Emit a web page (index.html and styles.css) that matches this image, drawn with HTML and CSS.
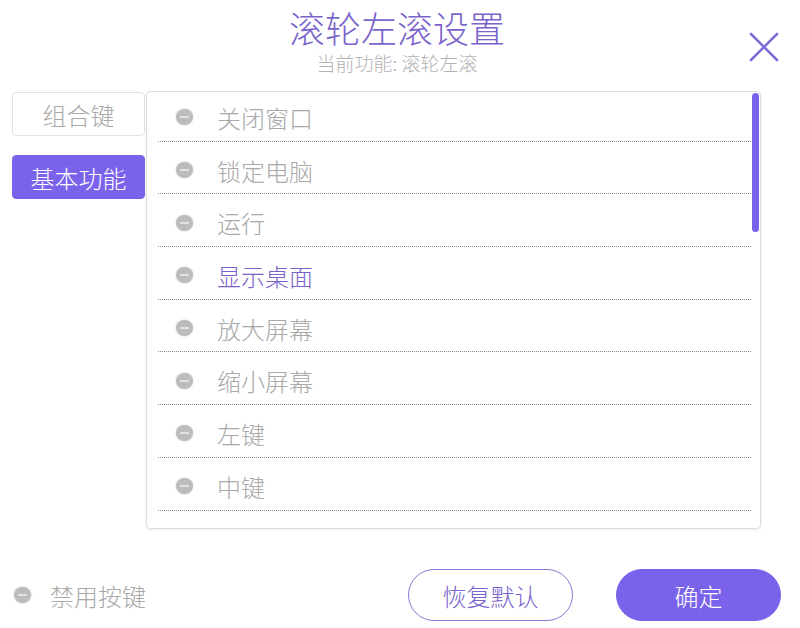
FILE: index.html
```html
<!DOCTYPE html>
<html lang="zh-CN">
<head>
<meta charset="UTF-8" />
<meta name="viewport" content="width=device-width, initial-scale=1" />
<title>滚轮左滚设置</title>
<link rel="stylesheet" href="styles.css">
</head>
<body>
  <header class="dialog-head">
    <div class="head-text">
      <h1 class="title">滚轮左滚设置</h1>
      <p class="subtitle">当前功能: 滚轮左滚</p>
    </div>
    <button class="close-btn" aria-label="关闭">
      <svg width="30" height="30" viewBox="0 0 30 30" aria-hidden="true">
        <path d="M2 2 L28 28 M28 2 L2 28" stroke="#7f6bd6" stroke-width="2.6" stroke-linecap="round" fill="none"/>
      </svg>
    </button>
  </header>

  <main class="dialog-body">
    <nav class="tabs">
      <button class="tab">组合键</button>
      <button class="tab active">基本功能</button>
    </nav>
    <section class="panel">
      <ul class="func-list">
        <li class="func-item"><span class="dot"></span>关闭窗口</li>
        <li class="func-item"><span class="dot"></span>锁定电脑</li>
        <li class="func-item"><span class="dot"></span>运行</li>
        <li class="func-item selected"><span class="dot"></span>显示桌面</li>
        <li class="func-item"><span class="dot"></span>放大屏幕</li>
        <li class="func-item"><span class="dot"></span>缩小屏幕</li>
        <li class="func-item"><span class="dot"></span>左键</li>
        <li class="func-item"><span class="dot"></span>中键</li>
      </ul>
      <div class="scroll-track"><div class="scroll-thumb"></div></div>
    </section>
  </main>

  <footer class="dialog-foot">
    <label class="disable-key"><span class="dot"></span>禁用按键</label>
    <div class="actions">
      <button class="btn btn-outline">恢复默认</button>
      <button class="btn btn-primary">确定</button>
    </div>
  </footer>
</body>
</html>
```

FILE: styles.css
```css
:root {
  --purple: #7b62ea;
  --purple-text: #7a64cc;
  --grey-text: #a9a9a9;
  --font-family: "Noto Sans CJK SC", "Noto Sans", sans-serif;
}
* {
  box-sizing: border-box;
}
html, body {
  margin: 0;
  padding: 0;
  background: #fff;
  font-family: var(--font-family);
  font-weight: 300;
  width: 800px;
  height: 628px;
  overflow: hidden;
}
button {
  font-family: inherit;
  font-weight: inherit;
  cursor: pointer;
}

/* Header */
.dialog-head {
  display: grid;
  grid-template-columns: 1fr auto 1fr;
  align-items: start;
}
.head-text {
  grid-column: 2;
  text-align: center;
  padding-right: 6px;
}
.title {
  margin: 7px 0 0 0;
  font-size: 36px;
  font-weight: 300;
  line-height: 40px;
  color: var(--purple-text);
}
.subtitle {
  margin: 3px 0 0 0;
  font-size: 19px;
  line-height: 26px;
  color: #b3b3b3;
}
.close-btn {
  grid-column: 3;
  justify-self: end;
  margin: 32px 21px 0 0;
  padding: 0;
  border: none;
  background: none;
  width: 30px;
  height: 30px;
}
.close-btn svg {
  display: block;
}

/* Body */
.dialog-body {
  display: flex;
  align-items: flex-start;
  margin-top: 15px;
  padding-left: 12px;
}
.tabs {
  display: flex;
  flex-direction: column;
  gap: 19px;
  width: 133px;
  padding-top: 1px;
}
.tab {
  height: 44px;
  border: 1px solid #e2e2e2;
  border-radius: 4px;
  background: #fff;
  color: var(--grey-text);
  font-size: 24px;
  padding: 0;
}
.tab.active {
  background: var(--purple);
  border-color: var(--purple);
  color: #fff;
}
.panel {
  display: flex;
  width: 615px;
  height: 438px;
  margin-left: 1px;
  border: 1px solid #dedede;
  border-radius: 4px;
  box-shadow: 0 1px 3px rgba(0, 0, 0, 0.08);
  overflow: hidden;
}
.func-list {
  list-style: none;
  flex: 1;
  margin: -3px 0 0 11px;
  padding: 0;
  overflow: hidden;
}
.func-item {
  display: flex;
  align-items: center;
  gap: 24px;
  height: 52.7px;
  padding: 5px 0 0 18px;
  border-bottom: 1px dotted #8a8a8a;
  font-size: 24px;
  color: var(--grey-text);
}
.func-item.selected {
  color: var(--purple-text);
}
.dot {
  position: relative;
  flex: none;
  width: 17px;
  height: 16px;
  border-radius: 50%;
  background: #bcbcbc;
  box-shadow: 0 0 2px #c8c8c8;
}
.dot::after {
  content: "";
  position: absolute;
  left: 4px;
  top: 7px;
  width: 9px;
  height: 2px;
  background: #e2e2e2;
}
.scroll-track {
  width: 9px;
  padding: 1px 1px 0 1px;
}
.scroll-thumb {
  width: 7px;
  height: 139px;
  border-radius: 4px;
  background: var(--purple);
}

/* Footer */
.dialog-foot {
  display: flex;
  align-items: center;
  justify-content: space-between;
  margin-top: 40px;
  padding: 0 19px 0 14px;
}
.disable-key {
  display: flex;
  align-items: center;
  gap: 19px;
  font-size: 24px;
  color: var(--grey-text);
}
.actions {
  display: flex;
  gap: 43px;
}
.btn {
  width: 165px;
  height: 52px;
  border-radius: 26px;
  font-size: 24px;
  padding: 0;
}
.btn-outline {
  border: 1px solid #8a78d8;
  background: #fff;
  color: var(--purple-text);
}
.btn-primary {
  border: 1px solid var(--purple);
  background: var(--purple);
  color: #fff;
}
```
